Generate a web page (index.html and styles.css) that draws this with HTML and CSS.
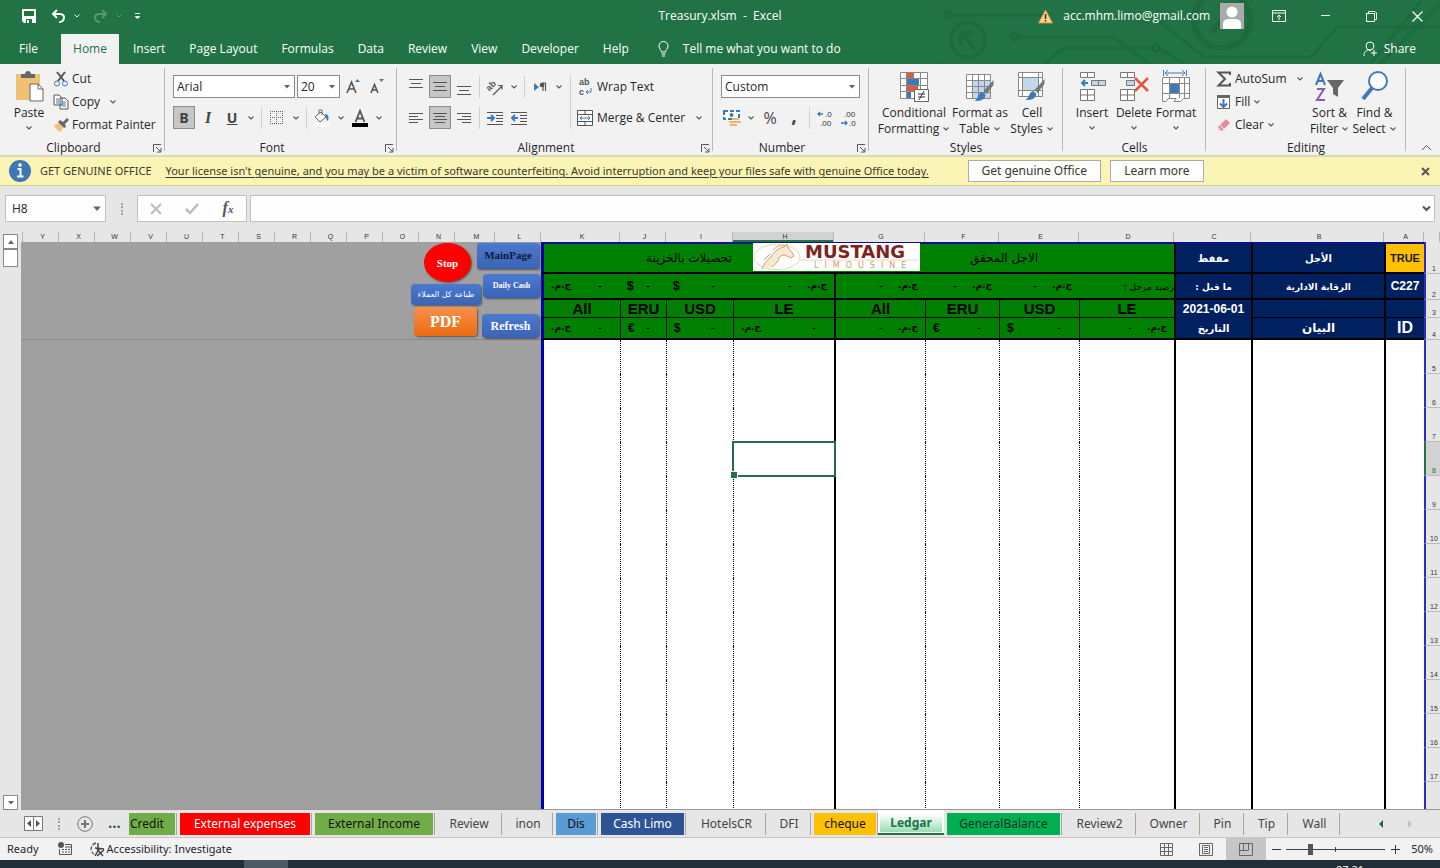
FILE: index.html
```html
<!DOCTYPE html>
<html lang="en">
<head>
<meta charset="utf-8">
<title>Treasury.xlsm - Excel</title>
<link rel="stylesheet" href="styles.css">
</head>
<body>
<svg class="defs" aria-hidden="true">
  <symbol id="chev" viewBox="0 0 8 6"><path d="M1.5 1.5L4 4l2.5-2.5" fill="none" stroke="#555" stroke-width="1.1"/></symbol>
  <symbol id="tri" viewBox="0 0 8 6"><path d="M1 1h6L4 4.500z" fill="#666"/></symbol>
  <symbol id="launch" viewBox="0 0 9 9"><path d="M.5 8V.5H8M3 3l4.500 4.500M8 4v4H4" fill="none" stroke="#555"/></symbol>
  <symbol id="brush" viewBox="0 0 20 22"><path d="M19 0v5l-7 9-3-3z" fill="#777"/><path d="M8 12l3 3c-1 5-5 6-11 6 4-2 3-8 8-9z" fill="#3f7ab8"/></symbol>
</svg>

<header class="top">
  <svg class="circuit" viewBox="0 0 520 64" aria-hidden="true">
    <g fill="none" stroke="#1e6a3f" stroke-width="3">
      <circle cx="29" cy="15" r="3"/><path d="M32 15h92"/>
      <circle cx="95" cy="37" r="3.500"/><path d="M99 37h94l44 32"/>
      <circle cx="20" cy="67" r="3"/><path d="M23 68h98l22-20h90M240 49l32 19h175L505-4"/>
      <circle cx="236" cy="48" r="3.500"/>
      <path d="M240 22l44 35h107l26-30h103M520 4l-72 72"/>
      <circle cx="48" cy="40" r="17.500" stroke-width="4"/>
      <path d="M55 49L41 33M41 45V33h12" stroke-width="4"/>
      <circle cx="302" cy="20" r="28" stroke-width="6"/>
      <path d="M292 32l20-23M298 7h15v14" stroke-width="6"/>
    </g>
  </svg>
  <div class="titlebar">
    <div class="quick">
      <button aria-label="Save"><svg width="14" height="14" viewBox="0 0 14 14"><path d="M0 0h14v14H2l-2-2zM2 2v5h10V2zM4 10v4h6v-4z" fill="#fff" fill-rule="evenodd"/><path d="M5 11h2v3H5z" fill="#fff"/></svg></button>
      <button aria-label="Undo"><svg width="15" height="14" viewBox="0 0 15 14"><path d="M2 5h7c6 0 5 8-1 8M6 1L2 5l4 4" fill="none" stroke="#fff" stroke-width="2"/></svg></button>
      <button class="mini" aria-label="Undo list"><svg width="8" height="6" viewBox="0 0 8 6"><path d="M1.500 1.500L4 4l2.500-2.500" fill="none" stroke="#fff"/></svg></button>
      <button aria-label="Redo" class="dim"><svg width="15" height="14" viewBox="0 0 15 14"><path d="M13 5H6C0 5 1 13 7 13M9 1l4 4-4 4" fill="none" stroke="#fff" stroke-width="2"/></svg></button>
      <button class="mini dim" aria-label="Redo list"><svg width="8" height="6" viewBox="0 0 8 6"><path d="M1.500 1.500L4 4l2.500-2.500" fill="none" stroke="#fff"/></svg></button>
      <button class="custom" aria-label="Customize"><svg width="7" height="8" viewBox="0 0 7 8"><path d="M1 1.500h5" stroke="#fff"/><path d="M.5 4h6l-3 3z" fill="#fff"/></svg></button>
    </div>
    <div class="doc">Treasury.xlsm&nbsp; -&nbsp; Excel</div>
    <div class="account">
      <svg width="15" height="15" viewBox="0 0 15 15"><path d="M7.500 1L14.500 14H.5z" fill="#ffd68a" stroke="#e8873a"/><path d="M7.500 5v5M7.500 11v1.500" stroke="#333" stroke-width="1.600"/></svg>
      <span class="mail">acc.mhm.limo@gmail.com</span>
      <svg width="24" height="26" viewBox="0 0 24 26"><path fill="#aaa" d="M0 0h24v26H0z"/><circle cx="12" cy="9" r="5.500" fill="#fff"/><path d="M3 26v-5c0-4 3-5 6-5h6c3 0 6 1 6 5v5z" fill="#fff"/></svg>
    </div>
    <div class="window">
      <button aria-label="Ribbon display options"><svg width="14" height="12" viewBox="0 0 14 12"><path d="M.5.5h13v11H.5zM.5 3h13M7 10V5M5 7l2-2 2 2" fill="none" stroke="#fff"/></svg></button>
      <button aria-label="Minimize"><svg width="11" height="11" viewBox="0 0 11 11"><path d="M1 4.500h9" stroke="#fff"/></svg></button>
      <button aria-label="Restore"><svg width="11" height="11" viewBox="0 0 11 11"><path d="M.5 2.500h8v8h-8zM2.500 2V.5H9L10.500 2v6.500H9" fill="none" stroke="#fff"/></svg></button>
      <button aria-label="Close"><svg width="11" height="11" viewBox="0 0 11 11"><path d="M.5.5l10 10M10.500.5l-10 10" stroke="#fff" stroke-width="1.200"/></svg></button>
    </div>
  </div>
  <nav class="menu">
    <button class="file">File</button><button class="on">Home</button><button>Insert</button><button>Page Layout</button><button>Formulas</button><button>Data</button><button>Review</button><button>View</button><button>Developer</button><button>Help</button>
    <button class="tell"><svg width="11" height="16" viewBox="0 0 11 16"><path d="M3.500 11C3.500 9 1 8 1 5a4.500 4.500 0 0 1 9 0c0 3-2.500 4-2.500 6zM3.500 13h4M4 15h3" fill="none" stroke="#fff"/></svg>Tell me what you want to do</button>
    <button class="share"><svg width="15" height="16" viewBox="0 0 15 16"><circle cx="7" cy="5" r="4" fill="none" stroke="#fff"/><path d="M1 15c0-4 2-6 5-6l2 1M11 9v6M8 12h6" fill="none" stroke="#fff"/></svg>Share</button>
  </nav>
</header>

<section class="ribbon">
  <div class="group clipboard">
    <div class="body">
      <button class="big"><svg width="30" height="32" viewBox="0 0 30 32"><path d="M2 4h24v26H2z" fill="#eec272"/><path d="M7 8V4h4c0-4 6-4 6 0h4v4z" fill="#666"/><path d="M16 14h8l5 5v12H16z" fill="#fff" stroke="#666"/><path d="M24 14v5h5" fill="none" stroke="#666"/></svg><span>Paste</span><svg width="8" height="6"><use href="#chev"/></svg></button>
      <div class="stack">
        <button><svg width="16" height="16" viewBox="0 0 16 16"><path d="M4 1l7 9M12 1L5 10" stroke="#555" stroke-width="2"/><circle cx="4" cy="12.500" r="2.500" fill="none" stroke="#3f7ab8"/><circle cx="12" cy="12.500" r="2.500" fill="none" stroke="#3f7ab8"/></svg>Cut</button>
        <button><svg width="16" height="16" viewBox="0 0 16 16"><path d="M1 1h5l3 3v7H1zM7 4h5l3 3v8H7z" fill="#fff" stroke="#555"/><path d="M3 5h3M3 7h3M3 9h3M9 8h4M9 10h4M9 12h4" stroke="#3f7ab8"/></svg>Copy<svg class="later" width="8" height="6"><use href="#chev"/></svg></button>
        <button><svg width="16" height="16" viewBox="0 0 16 16"><path d="M1 8l5-2 4 5-3 4c-2-1-4-3-6-7z" fill="#eec272"/><path d="M5 5l2-2 3 2 4-4 2 2-4 4 1 3-2 1z" fill="#666"/></svg>Format Painter</button>
      </div>
    </div>
    <div class="label">Clipboard<button aria-label="Clipboard options"><svg width="9" height="9"><use href="#launch"/></svg></button></div>
  </div>

  <div class="group font">
    <div class="body rows">
      <div class="row">
        <label class="combo face"><select aria-label="Font"><option>Arial</option></select><svg width="8" height="6"><use href="#tri"/></svg></label>
        <label class="combo size"><select aria-label="Font size"><option>20</option></select><svg width="8" height="6"><use href="#tri"/></svg></label>
        <button class="t" aria-label="Increase font size"><svg width="18" height="18" viewBox="0 0 18 18"><path d="M3 15L7.500 4 12 15M4.500 11h6" fill="none" stroke="#555" stroke-width="1.600"/><path d="M11 4l2.500-3L16 4z" fill="#3f7ab8"/></svg></button>
        <button class="t" aria-label="Decrease font size"><svg width="18" height="18" viewBox="0 0 18 18"><path d="M3 15l3.500-8.500L10 15M4.500 12h4.500" fill="none" stroke="#555" stroke-width="1.600"/><path d="M11 1h5l-2.500 3z" fill="#3f7ab8"/></svg></button>
      </div>
      <div class="row">
        <button class="t on"><b>B</b></button><button class="t it"><i>I</i></button><button class="t"><u><b>U</b></u></button><button class="c" aria-label="Underline list"><svg width="8" height="6"><use href="#chev"/></svg></button><span class="sep"></span>
        <button class="t" aria-label="Borders"><svg width="14" height="14" viewBox="0 0 14 14"><path d="M.5 0v13M6.500 0v13M12.500 0v13M0 .5h13M0 6.500h13" stroke="#666" stroke-dasharray="1 1"/><path d="M0 12.500h13" stroke="#555" stroke-dasharray="1 1"/></svg></button><button class="c" aria-label="Border list"><svg width="8" height="6"><use href="#chev"/></svg></button><span class="sep"></span>
        <button class="t" aria-label="Fill color"><svg width="18" height="18" viewBox="0 0 18 18"><path d="M2 8l6-5 5 5-6 5zM6 5V1h3v5" fill="#fff" stroke="#666"/><path d="M12 5c4 0 4 4 3 7-2-1-2-3-3-7z" fill="#3f7ab8"/><path d="M1 14h15v4H1z" fill="#fff"/></svg></button><button class="c" aria-label="Fill list"><svg width="8" height="6"><use href="#chev"/></svg></button>
        <button class="t" aria-label="Font color"><svg width="18" height="18" viewBox="0 0 18 18"><path d="M4.500 13L9 2l4.500 11M6 9.500h6" fill="none" stroke="#555" stroke-width="1.800"/><path d="M1 14h16v4H1z"/></svg></button><button class="c" aria-label="Color list"><svg width="8" height="6"><use href="#chev"/></svg></button>
      </div>
    </div>
    <div class="label">Font<button aria-label="Font options"><svg width="9" height="9"><use href="#launch"/></svg></button></div>
  </div>

  <div class="group align">
    <div class="body">
      <div class="rows">
        <div class="row">
          <button class="t" aria-label="Top"><svg width="14" height="16" viewBox="0 0 14 16"><path d="M0 .5h14M2 4.500h10M0 8.500h14" stroke="#555"/></svg></button>
          <button class="t on" aria-label="Middle"><svg width="14" height="16" viewBox="0 0 14 16"><path d="M0 3.500h14M2 7.500h10M0 11.500h14" stroke="#555"/></svg></button>
          <button class="t" aria-label="Bottom"><svg width="14" height="16" viewBox="0 0 14 16"><path d="M0 7.500h14M2 11.500h10M0 15.500h14" stroke="#555"/></svg></button>
          <span class="sep"></span>
          <button class="t" aria-label="Orientation"><svg width="18" height="18" viewBox="0 0 18 18"><text x="0" y="10" transform="rotate(-45 6 8)" class="ab">ab</text><path d="M7 17l9-9M12 7.500h4v4" fill="none" stroke="#555" stroke-width="1.200"/></svg></button><button class="c" aria-label="Orientation list"><svg width="8" height="6"><use href="#chev"/></svg></button>
          <span class="sep"></span>
          <button class="t" aria-label="Text direction"><svg width="14" height="12" viewBox="0 0 14 12"><path d="M1 2l5 4-5 4z" fill="#3f7ab8"/><path d="M9 2h4M10 2v8M12.500 2v8" stroke="#555" stroke-width="1.200"/><circle cx="9" cy="4" r="2.300" fill="#555"/></svg></button><button class="c" aria-label="Direction list"><svg width="8" height="6"><use href="#chev"/></svg></button>
        </div>
        <div class="row">
          <button class="t" aria-label="Left"><svg width="14" height="14" viewBox="0 0 14 14"><path d="M0 2.500h14M0 5.500h9M0 8.500h14M0 11.500h9" stroke="#555"/></svg></button>
          <button class="t on" aria-label="Center"><svg width="14" height="14" viewBox="0 0 14 14"><path d="M0 2.500h14M2 5.500h10M0 8.500h14M2 11.500h10" stroke="#555"/></svg></button>
          <button class="t" aria-label="Right"><svg width="14" height="14" viewBox="0 0 14 14"><path d="M0 2.500h14M5 5.500h9M0 8.500h14M5 11.500h9" stroke="#555"/></svg></button>
          <span class="sep"></span>
          <button class="t" aria-label="Decrease indent"><svg width="16" height="14" viewBox="0 0 16 14"><path d="M0 1.500h16M9 4.500h7M9 7.500h7M9 10.500h7M0 13.500h16" stroke="#555"/><path d="M0 7h6M4 4l3 3-3 3" fill="none" stroke="#3f7ab8" stroke-width="2"/></svg></button>
          <button class="t" aria-label="Increase indent"><svg width="16" height="14" viewBox="0 0 16 14"><path d="M0 1.500h16M9 4.500h7M9 7.500h7M9 10.500h7M0 13.500h16" stroke="#555"/><path d="M7 7H2M4 4L1 7l3 3" fill="none" stroke="#3f7ab8" stroke-width="2"/></svg></button>
        </div>
      </div>
      <span class="sep tall"></span>
      <div class="rows">
        <div class="row"><button class="text"><svg width="16" height="20" viewBox="0 0 16 20"><text x="2" y="8" class="abc">ab</text><text x="2" y="18" class="abc">c</text><path d="M14 11v4H9M11 13l-2 2 2 2" fill="none" stroke="#3f7ab8"/></svg>Wrap Text</button></div>
        <div class="row"><button class="text"><svg width="16" height="16" viewBox="0 0 16 16"><path d="M.5.5h15v15H.5zM.5 4.500h15M.5 11.500h15M8 .5v4M8 11.500v4" fill="#fff" stroke="#555"/><path d="M3 8h10M5 6L3 8l2 2M11 6l2 2-2 2" fill="none" stroke="#3f7ab8"/></svg>Merge &amp; Center<svg class="later" width="8" height="6"><use href="#chev"/></svg></button></div>
      </div>
    </div>
    <div class="label">Alignment<button aria-label="Alignment options"><svg width="9" height="9"><use href="#launch"/></svg></button></div>
  </div>

  <div class="group number">
    <div class="body rows">
      <div class="row"><label class="combo format"><select aria-label="Number format"><option>Custom</option></select><svg width="8" height="6"><use href="#tri"/></svg></label></div>
      <div class="row">
        <button class="t" aria-label="Accounting"><svg width="18" height="16" viewBox="0 0 18 16"><path d="M1 1h15v8H1z" fill="#fff" stroke="#3f7ab8" stroke-width="2" stroke-dasharray="4 2"/><circle cx="8.500" cy="5" r="2" fill="#3f7ab8"/><path d="M9 8h7v2H9zM11 11h7v2h-7zM6 11h5v2H6zM7 14h7v2H7z" fill="#e9b96e"/></svg></button><button class="c" aria-label="Accounting list"><svg width="8" height="6"><use href="#chev"/></svg></button>
        <button class="t pct">%</button><button class="t pct comma"><b>,</b></button><span class="sep"></span>
        <button class="t" aria-label="Increase decimal"><svg width="16" height="20" viewBox="0 0 16 20"><path d="M6 6H1M3 4L1 6l2 2" fill="none" stroke="#3f7ab8" stroke-width="1.300"/><text x="8" y="9" class="dec">.0</text><text x="3" y="18" class="dec">.00</text></svg></button>
        <button class="t" aria-label="Decrease decimal"><svg width="16" height="20" viewBox="0 0 16 20"><path d="M0 15h6M4 13l2 2-2 2" fill="none" stroke="#3f7ab8" stroke-width="1.300"/><text x="3" y="9" class="dec">.00</text><text x="8" y="18" class="dec">.0</text></svg></button>
      </div>
    </div>
    <div class="label">Number<button aria-label="Number options"><svg width="9" height="9"><use href="#launch"/></svg></button></div>
  </div>

  <div class="group styles">
    <div class="body">
      <button class="big"><svg width="30" height="32" viewBox="0 0 30 32"><path d="M1 2h27v27H1z" fill="#fff"/><path d="M8 2h6v6H8zM8 16h11v5H8z" fill="#e0583f"/><path d="M8 9h12v6H8zM8 22h4v7H8z" fill="#3f7ab8"/><path d="M1.500 2.500h27v26h-27zM1.500 8.500h27M1.500 15.500h27M1.500 21.500h27M7.500 2v27M14.500 2v7M21.500 2v27" fill="none" stroke="#888"/><path d="M15.500 19.500h14v12h-14z" fill="#fff" stroke="#666"/><path d="M19 24h7M19 27h7M25 21l-5 9" stroke="#333"/></svg><span>Conditional</span><span>Formatting <svg width="8" height="6"><use href="#chev"/></svg></span></button>
      <button class="big"><svg width="30" height="32" viewBox="0 0 30 32"><path d="M1.500 4.500h24v24h-24z" fill="#fff"/><path d="M8 11h18v17H8z" fill="#c3d6ea"/><path d="M1.500 4.500h24v24h-24zM1.500 10.500h24M1.500 16.500h24M1.500 22.500h24M7.500 4v24M13.500 4v24M19.500 4v24" fill="none" stroke="#888"/><use href="#brush" x="9" y="10" width="21" height="22"/></svg><span>Format as</span><span>Table <svg width="8" height="6"><use href="#chev"/></svg></span></button>
      <button class="big"><svg width="30" height="32" viewBox="0 0 30 32"><path d="M1.500 2.500h24v24h-24z" fill="#fff"/><path d="M6 8h15v12H6z" fill="#c3d6ea"/><path d="M1.500 2.500h24v24h-24zM1.500 7.500h24M1.500 20.500h24M5.500 2v24M21.500 2v24" fill="none" stroke="#888"/><use href="#brush" x="8" y="9" width="21" height="22"/></svg><span>Cell</span><span>Styles <svg width="8" height="6"><use href="#chev"/></svg></span></button>
    </div>
    <div class="label">Styles</div>
  </div>

  <div class="group cells">
    <div class="body">
      <button class="big"><svg width="30" height="32" viewBox="0 0 30 32"><path d="M3.500 2.500h14v5h-14zM10.500 2v6M3.500 19.500h14v11h-14zM3.500 25h14M10.500 19v12" fill="#fff" stroke="#777"/><path d="M14.500 10.500h14v5h-14zM21.500 10v6" fill="#c3d6ea" stroke="#777"/><path d="M11 13H5M8 10l-3 3 3 3" fill="none" stroke="#3f7ab8" stroke-width="2"/></svg><span>Insert</span><svg width="8" height="6"><use href="#chev"/></svg></button>
      <button class="big"><svg width="30" height="32" viewBox="0 0 30 32"><path d="M1.500 2.500h14v5h-14zM8.500 2v6M1.500 19.500h14v11h-14zM1.500 25h14M8.500 19v12" fill="#fff" stroke="#777"/><path d="M7.500 10.500h8v5h-8z" fill="#c3d6ea" stroke="#777"/><path d="M16 8l13 13M29 8L16 21" stroke="#e0583f" stroke-width="2.500"/></svg><span>Delete</span><svg width="8" height="6"><use href="#chev"/></svg></button>
      <button class="big"><svg width="30" height="32" viewBox="0 0 30 32"><path d="M2.500 0v6M25.500 0v6M4 3h20M7 0L4 3l3 3M21 0l3 3-3 3" fill="none" stroke="#3f7ab8"/><path d="M1.500 7.500h27v21h-6l-3 3H13l2-3H7l-2 3H1.500z" fill="#fff" stroke="#888"/><path d="M1.500 13.500h27M1.500 23.500h27M8.500 7v21M18.500 7v21M23.500 7v21" stroke="#888"/><path d="M9 14h9v9H9z" fill="#3f7ab8"/></svg><span>Format</span><svg width="8" height="6"><use href="#chev"/></svg></button>
    </div>
    <div class="label">Cells</div>
  </div>

  <div class="group editing">
    <div class="body">
      <div class="stack">
        <button><svg width="16" height="16" viewBox="0 0 16 16"><path d="M14 4V1.500H2.500L9 8l-6.500 6.500H14V12" fill="none" stroke="#555" stroke-width="2"/></svg>AutoSum<svg class="later" width="8" height="6"><use href="#chev"/></svg></button>
        <button><svg width="16" height="16" viewBox="0 0 16 16"><path d="M1.500 1.500h12v13h-12z" fill="#fff" stroke="#666"/><path d="M1 1h13v3H1z" fill="#666"/><path d="M7.500 5v8M4 9.500L7.500 13 11 9.500" fill="none" stroke="#3f7ab8" stroke-width="2"/></svg>Fill <svg width="8" height="6"><use href="#chev"/></svg></button>
        <button><svg width="16" height="16" viewBox="0 0 16 16"><path d="M2 10l8-8 4 4-8 8H4l-2-2z" fill="#ea8a9c"/><path d="M2 10l4 4H4l-2-2z" fill="#f7d0d8"/><path d="M4 8l4 4" stroke="#fff"/></svg>Clear <svg width="8" height="6"><use href="#chev"/></svg></button>
      </div>
      <button class="big"><svg width="30" height="32" viewBox="0 0 30 32"><path d="M1 15L5.500 4 10 15M3 11h5" fill="none" stroke="#3f7ab8" stroke-width="2"/><path d="M2 19h7L2 30h8" fill="none" stroke="#8a5bb0" stroke-width="2"/><path d="M12 10h17l-6 8v9l-5-3v-6z" fill="#666"/></svg><span>Sort &amp;</span><span>Filter <svg width="8" height="6"><use href="#chev"/></svg></span></button>
      <button class="big"><svg width="30" height="32" viewBox="0 0 30 32"><circle cx="18" cy="11" r="9" fill="#fff" stroke="#3f7ab8" stroke-width="2"/><path d="M12 18L3 29" stroke="#3f7ab8" stroke-width="4"/></svg><span>Find &amp;</span><span>Select <svg width="8" height="6"><use href="#chev"/></svg></span></button>
    </div>
    <div class="label">Editing</div>
  </div>
  <button class="collapse" aria-label="Collapse ribbon"><svg width="11" height="7" viewBox="0 0 11 7"><path d="M1 6l4.500-4.500L10 6" fill="none" stroke="#555"/></svg></button>
</section>

<div class="notice">
  <svg width="22" height="22" viewBox="0 0 22 22"><circle cx="11" cy="11" r="11" fill="#3f76b5"/><circle cx="11" cy="5" r="1.800" fill="#fff"/><path d="M8.500 9h3v7M8 16.500h6.500" fill="none" stroke="#fff" stroke-width="2"/></svg>
  <span>GET GENUINE OFFICE</span>
  <a href="#license">Your license isn't genuine, and you may be a victim of software counterfeiting. Avoid interruption and keep your files safe with genuine Office today.</a>
  <button class="get">Get genuine Office</button><button class="more">Learn more</button>
  <button class="dismiss" aria-label="Dismiss"><svg width="9" height="9" viewBox="0 0 9 9"><path d="M1 1l7 7M8 1L1 8" stroke="#555" stroke-width="2"/></svg></button>
</div>

<div class="formula">
  <label class="combo name"><input aria-label="Name box" value="H8"><svg width="10" height="8" viewBox="0 0 8 6"><use href="#tri"/></svg></label>
  <span class="dots"></span>
  <div class="fx">
    <button aria-label="Cancel"><svg width="12" height="12" viewBox="0 0 12 12"><path d="M1 1l10 10M11 1L1 11" stroke="#bbb" stroke-width="2"/></svg></button>
    <button aria-label="Enter"><svg width="14" height="12" viewBox="0 0 14 12"><path d="M1 6l4 4 8-9" fill="none" stroke="#bbb" stroke-width="2.500"/></svg></button>
    <button aria-label="Insert function"><i>f<small>x</small></i></button>
  </div>
  <label class="combo entry"><input aria-label="Formula"><svg width="9" height="7" viewBox="0 0 9 7"><path d="M1 1.500l3.500 3.500L8 1.500" fill="none" stroke="#555" stroke-width="2"/></svg></label>
</div>

<main class="sheet">
  <div class="scroll">
    <button aria-label="Scroll up"><svg width="8" height="6" viewBox="0 0 8 6"><path d="M1 5h6L4 1z" fill="#666"/></svg></button>
    <span class="thumb"></span>
    <button class="down" aria-label="Scroll down"><svg width="8" height="6"><use href="#tri"/></svg></button>
  </div>
  <div class="pane">
    <table class="grid">
      <colgroup><col><col span="12" class="w36"><col class="w40"><col class="w46"><col class="wk"><col class="wj"><col class="wi"><col class="wh"><col class="wg"><col class="wf"><col class="we"><col class="wd"><col class="wc"><col class="wb"><col class="wa"><col class="wn"></colgroup>
      <thead><tr><th></th><th>Y</th><th>X</th><th>W</th><th>V</th><th>U</th><th>T</th><th>S</th><th>R</th><th>Q</th><th>P</th><th>O</th><th>N</th><th>M</th><th>L</th><th>K</th><th>J</th><th>I</th><th class="sel">H</th><th>G</th><th>F</th><th>E</th><th>D</th><th>C</th><th>B</th><th>A</th><th></th></tr></thead>
      <tbody class="head">
        <tr class="r1"><td class="void" colspan="15" rowspan="4"></td>
          <td class="g edge title" colspan="4"><bdi dir="rtl">تحصيلات بالخزينة</bdi></td><td class="g title" colspan="4"><bdi dir="rtl">الاجل المحقق</bdi></td>
          <td class="n tk"><bdi dir="rtl">مفقط</bdi></td><td class="n tk"><bdi dir="rtl">الأجل</bdi></td><td class="true tk">TRUE</td><th>1</th></tr>
        <tr class="r2">
          <td class="g edge"><div class="sum"><bdi dir="rtl">ج.م.</bdi><span>-</span></div></td><td class="g"><div class="sum tight"><span>$</span><span>-</span></div></td><td class="g"><div class="sum"><span>$</span><span>-</span></div></td><td class="g"><div class="sum end"><span>-</span><bdi dir="rtl">ج.م.</bdi></div></td>
          <td class="g tk"><div class="sum end"><span>-</span><bdi dir="rtl">ج.م.</bdi></div></td><td class="g"><div class="sum end"><span>-</span><bdi dir="rtl">ج.م.</bdi></div></td><td class="g"><div class="sum end"><span>-</span><bdi dir="rtl">ج.م.</bdi></div></td><td class="g carry"><bdi dir="rtl">رصيد مرحل :</bdi></td>
          <td class="n tk"><bdi dir="rtl">ما قبل :</bdi></td><td class="n tk"><bdi dir="rtl">الرقابة الادارية</bdi></td><td class="n tk code">C227</td><th>2</th></tr>
        <tr class="r3">
          <td class="g edge">All</td><td class="g th">ERU</td><td class="g th">USD</td><td class="g th">LE</td><td class="g tk">All</td><td class="g th">ERU</td><td class="g th">USD</td><td class="g th">LE</td>
          <td class="n tk date">2021-06-01</td><td class="n tk line"></td><td class="n tk line"></td><th>3</th></tr>
        <tr class="r4">
          <td class="g edge"><div class="sum"><bdi dir="rtl">ج.م.</bdi><span>-</span></div></td><td class="g th"><div class="sum tight"><span>€</span><span>-</span></div></td><td class="g th"><div class="sum"><span>$</span><span>-</span></div></td><td class="g th"><div class="sum"><bdi dir="rtl">ج.م.</bdi><span>-</span></div></td>
          <td class="g tk"><div class="sum end"><span>-</span><bdi dir="rtl">ج.م.</bdi></div></td><td class="g th"><div class="sum"><span>€</span><span>-</span></div></td><td class="g th"><div class="sum"><span>$</span><span>-</span></div></td><td class="g th"><div class="sum end"><span>-</span><bdi dir="rtl">ج.م.</bdi></div></td>
          <td class="n tk"><bdi dir="rtl">التاريخ</bdi></td><td class="n tk bayan"><bdi dir="rtl">البيان</bdi></td><td class="n tk id">ID</td><th>4</th></tr>
      </tbody>
      <tbody class="blank">
        <tr><td class="void" colspan="15"> <td><td><td><td> <td><td><td><td> <td><td><td> <th>5</th></tr>
        <tr><td class="void" colspan="15"> <td><td><td><td> <td><td><td><td> <td><td><td> <th>6</th></tr>
        <tr><td class="void" colspan="15"> <td><td><td><td> <td><td><td><td> <td><td><td> <th>7</th></tr>
        <tr><td class="void" colspan="15"> <td><td><td><td class="active"><span class="cursor"></span> <td><td><td><td> <td><td><td> <th class="sel">8</th></tr>
        <tr><td class="void" colspan="15"> <td><td><td><td> <td><td><td><td> <td><td><td> <th>9</th></tr>
        <tr><td class="void" colspan="15"> <td><td><td><td> <td><td><td><td> <td><td><td> <th>10</th></tr>
        <tr><td class="void" colspan="15"> <td><td><td><td> <td><td><td><td> <td><td><td> <th>11</th></tr>
        <tr><td class="void" colspan="15"> <td><td><td><td> <td><td><td><td> <td><td><td> <th>12</th></tr>
        <tr><td class="void" colspan="15"> <td><td><td><td> <td><td><td><td> <td><td><td> <th>13</th></tr>
        <tr><td class="void" colspan="15"> <td><td><td><td> <td><td><td><td> <td><td><td> <th>14</th></tr>
        <tr><td class="void" colspan="15"> <td><td><td><td> <td><td><td><td> <td><td><td> <th>15</th></tr>
        <tr><td class="void" colspan="15"> <td><td><td><td> <td><td><td><td> <td><td><td> <th>16</th></tr>
        <tr><td class="void" colspan="15"> <td><td><td><td> <td><td><td><td> <td><td><td> <th>17</th></tr>
        <tr><td class="void" colspan="15"> <td><td><td><td> <td><td><td><td> <td><td><td> <th></th></tr>
      </tbody>
    </table>
    <div class="shapes">
      <button class="stop">Stop</button>
      <button class="blue main">MainPage</button>
      <button class="blue daily">Daily Cash</button>
      <button class="blue print"><bdi dir="rtl">طباعة كل العملاء</bdi></button>
      <button class="pdf">PDF</button>
      <button class="blue refresh">Refresh</button>
    </div>
    <svg class="logo" viewBox="0 0 167 28" role="img" aria-label="Mustang Limousine">
      <path fill="#fff" d="M0 0h167v28H0z"/>
      <ellipse cx="24" cy="14" rx="23" ry="12.500" fill="none" stroke="#e8d3b6"/>
      <path d="M9 26c2-5 4-8 9-12 3-5 7-9 13-10l3-2 1 3c3 2 4 5 6 8l-3 2-6-3c-3 0-5 1-6 3-1 4-4 7-9 9z" fill="#f7e9d6"/>
      <path d="M9 26c2-5 4-8 9-12 3-5 7-9 13-10l3-3 1 4c3 2 4 5 6 8l-3 2-6-3c-3 0-5 1-6 3-1 4-4 7-8 9M20 7c4-4 7-5 12-4M17 11l-6 6" fill="none" stroke="#cf9f68"/>
      <path d="M47 17h118" stroke="#ecd5b8"/>
      <text x="52" y="15" class="lg1">MUSTANG</text>
      <text x="61" y="25" class="lg2">LIMOUSINE</text>
    </svg>
  </div>
</main>

<nav class="tabs">
  <div class="navs"><button class="move" aria-label="Scroll tabs"><svg width="20" height="15" viewBox="0 0 20 15"><path d="M.5.500h9v14h-9zM9.500.5h9v14h-9z" fill="#fff" stroke="#777"/><path d="M7 4v7L3 7.500zM12 4v7l4-3.500z" fill="#555"/></svg></button><span class="dots"></span><button aria-label="New sheet"><svg width="16" height="16" viewBox="0 0 16 16"><circle cx="8" cy="8" r="7.300" fill="none" stroke="#777"/><path d="M8 4v8M4 8h8" stroke="#777" stroke-width="2"/></svg></button><button class="ell">...</button></div>
  <div class="list">
    <button class="lime cut"><span>Credit</span></button><button class="red"><span>External expenses</span></button><button class="lime"><span>External Income</span></button><button><span>Review</span></button><button><span>inon</span></button><button class="sky"><span>Dis</span></button><button class="navy"><span>Cash Limo</span></button><button><span>HotelsCR</span></button><button><span>DFI</span></button><button class="gold"><span>cheque</span></button><button class="current"><span>Ledgar</span></button><button class="emerald"><span>GeneralBalance</span></button><button><span>Review2</span></button><button><span>Owner</span></button><button><span>Pin</span></button><button><span>Tip</span></button><button><span>Wall</span></button>
  </div>
  <div class="hs"><button aria-label="Scroll left"><svg width="6" height="8" viewBox="0 0 6 8"><path d="M5 0v8L1 4z" fill="#1d6b40"/></svg></button><button aria-label="Scroll right"><svg width="6" height="8" viewBox="0 0 6 8"><path d="M1 0v8l4-4z" fill="#c4c4c4"/></svg></button></div>
</nav>

<footer class="status">
  <span>Ready</span>
  <button class="rec" aria-label="Record macro"><svg width="14" height="14" viewBox="0 0 14 14"><circle cx="3" cy="3" r="3" fill="#555"/><path d="M7 2.500h6.500v10h-12V7M7 5h6M4 7.500h2M7 7.500h2M10 7.500h2M4 10h2M7 10h2M10 10h2" fill="none" stroke="#555"/></svg></button>
  <button class="acc"><svg width="17" height="15" viewBox="0 0 17 15"><path d="M7 1a6 6 0 0 0-2 11" fill="none" stroke="#555" stroke-width="1.300" stroke-dasharray="4 1.500"/><path d="M9 1v5M6 6l9 1M10 7l-4 7M8 7l6 7M15 8l-7 6" fill="none" stroke="#444" stroke-width="1.500"/></svg>Accessibility: Investigate</button>
  <div class="views">
    <button aria-label="Normal"><svg width="13" height="13" viewBox="0 0 13 13"><path d="M.5.5h12v12H.5zM.5 4.500h12M.5 8.500h12M4.500.5v12M8.500.5v12" fill="none" stroke="#666"/></svg></button>
    <button aria-label="Page layout"><svg width="14" height="13" viewBox="0 0 14 13"><path d="M.5.5h13v12H.5zM3.500 2.500h7v8h-7zM5 4.500h4M5 6.500h4M5 8.500h4" fill="none" stroke="#666"/></svg></button>
    <button class="on" aria-label="Page break preview"><svg width="14" height="13" viewBox="0 0 14 13"><path d="M.5.5h13v12H.5zM4.500.5v7M9.500.5v7M.5 7.500h9" fill="none" stroke="#666"/></svg></button>
  </div>
  <button class="zb" aria-label="Zoom out"><svg width="9" height="9" viewBox="0 0 9 9"><path d="M0 4.500h9" stroke="#333"/></svg></button>
  <input type="range" class="zoom" aria-label="Zoom" min="0" max="100" value="23">
  <button class="zb" aria-label="Zoom in"><svg width="9" height="9" viewBox="0 0 9 9"><path d="M0 4.500h9M4.500 0v9" stroke="#333"/></svg></button>
  <span class="pc">50%</span>
</footer>
<div class="taskbar"><span class="app"></span><span class="clock">07:21</span></div>
</body>
</html>
```
FILE: styles.css
```css
* { box-sizing: border-box; }
body { margin: 0; height: 100vh; display: flex; flex-direction: column; overflow: hidden; background: #e6e6e6; color: #262626; font: 12px/16px "Open Sans", "Noto Sans", sans-serif; }
button, input, select { font: inherit; color: inherit; margin: 0; padding: 0; border: 0; background: none; border-radius: 0; }
button { display: flex; align-items: center; justify-content: center; white-space: nowrap; }
svg { flex: none; display: block; overflow: visible; }
.defs { position: absolute; width: 0; height: 0; overflow: hidden; }

.top { position: relative; background: #217346; color: #fff; flex: none; }
.circuit { position: absolute; right: 0; top: 0; width: 520px; height: 64px; overflow: hidden; }
.titlebar { position: relative; height: 34px; display: grid; grid-template-columns: 1fr auto 1fr; padding-bottom: 2px; align-items: center; }
.quick { display: flex; align-items: center; padding-left: 18px; gap: 3px; }
.quick button { width: 22px; height: 24px; }
.quick button + button { margin-left: 4px; }
.quick .mini, .quick button + .mini { width: 10px; margin: 0; }
.quick .dim { opacity: .25; }
.quick button + .custom { margin: 0; width: 20px; }
.account { grid-column: 3; grid-row: 1; justify-self: end; display: flex; align-items: center; gap: 10px; margin-right: 196px; }
.window { grid-column: 3; grid-row: 1; justify-self: end; display: flex; }
.window button { width: 46px; height: 32px; }
.menu { position: relative; display: flex; height: 30px; }
.menu button { padding: 0 12px; }
.menu .file { width: 61px; padding: 0 4px 0 0; }
.menu .on { background: #f3f2f3; color: #217346; width: 58px; padding: 0; margin-right: 2px; }
.menu .tell { gap: 14px; padding-left: 17px; }
.menu .share { margin-left: auto; padding-right: 24px; gap: 6px; }

.ribbon { display: flex; height: 93px; flex: none; background: #f3f2f3; border-bottom: 2px solid #ddd9b8; }
.group { position: relative; display: flex; flex-direction: column; padding-left: 8px; flex: none; }
.group::after { content: ""; position: absolute; right: 0; top: 4px; bottom: 4px; width: 1px; background: #b8b8b8; }
.body { display: flex; height: 76px; flex: none; align-items: flex-start; }
.label { position: relative; text-align: center; height: 16px; margin-left: -8px; padding-right: 18px; }
.label button { position: absolute; right: 3px; bottom: 3px; }
.clipboard { width: 165px; }
.font { width: 232px; }
.align { width: 316px; }
.number { width: 156px; }
.styles { width: 194px; }
.cells { width: 143px; }
.editing { width: 200px; }
.styles .label, .cells .label, .editing .label { padding: 0; }
.rows { display: flex; flex-direction: column; padding-top: 7px; }
.row { display: flex; align-items: center; gap: 2px; height: 31px; }
.t { width: 22px; height: 23px; flex: none; font-size: 14px; color: #444; }
.t.on { background: #c6c6c6; border: 1px solid #8e8e8e; }
.it { font-family: "Liberation Serif", serif; font-size: 16px; font-weight: bold; }
.pct { font-size: 16px; }
.comma { padding-bottom: 6px; font-size: 20px; }
.c { width: 12px; height: 23px; flex: none; }
.sep { width: 1px; height: 22px; margin: 0 2px; background: #d0d0d0; flex: none; }
.sep.tall { height: 54px; margin: 11px 4px 0 5px; }
.text { gap: 4px; padding-left: 2px; }
.later { margin-left: 6px; }
.combo { position: relative; display: flex; align-items: center; background: #fff; border: 1px solid #8a8a8a; height: 23px; }
.combo select, .combo input { appearance: none; width: 100%; height: 100%; padding: 0 3px; outline: 0; }
.combo svg { position: absolute; right: 3px; pointer-events: none; }
.face { width: 122px; }
.size { width: 43px; }
.format { width: 139px; }
.stack { display: flex; flex-direction: column; padding-top: 3px; }
.stack button { height: 23px; justify-content: flex-start; gap: 3px; }
.big { flex-direction: column; padding-top: 6px; justify-content: flex-start; height: 76px; }
.big > svg:first-child { margin-bottom: 3px; }
.big > svg:last-child { margin-top: 4px; }
.big span { display: flex; align-items: center; gap: 3px; }
.clipboard .big { width: 42px; }
.clipboard .stack { padding-left: 3px; }
.styles .big:nth-child(1) { width: 74px; }
.styles .big:nth-child(2) { width: 58px; }
.styles .big:nth-child(3) { width: 46px; }
.cells .big { width: 42px; }
.editing .stack { width: 93px; padding-left: 2px; }
.editing .big { width: 45px; }
.collapse { margin-left: auto; align-self: flex-end; padding: 0 8px 4px; }

.notice { display: flex; align-items: center; height: 29px; flex: none; padding: 0 10px 0 9px; background: #fbf5b5; border-bottom: 1px solid #d6d28c; white-space: nowrap; color: #3b3a2c; font-family: "Noto Sans", sans-serif; font-size: 11px; }
.notice span { margin: 0 14px 0 9px; }
.notice a { color: inherit; text-underline-offset: 2px; }
.notice .get, .notice .more { background: #fdfdfd; border: 1px solid #ababab; height: 22px; width: 133px; margin-left: 39px; font-size: 12px; }
.notice .more { width: 94px; margin-left: 9px; }
.notice .dismiss { margin-left: auto; }

.formula { display: flex; height: 46px; flex: none; padding: 9px 5px 9px 5px; align-items: flex-start; }
.formula .combo, .fx { height: 27px; border: 1px solid #c0c0c0; background: #fdfdfd; }
.name { width: 101px; }
.dots { width: 2px; height: 12px; border-left: 2px dotted #a0a0a0; }
.formula .dots { margin: 8px 14px 0 15px; }
.fx { display: flex; width: 110px; }
.fx button { flex: 1; font: bold 16px/20px "Liberation Serif", serif; color: #555; }
.fx small { font-size: 11px; }
.formula .entry { flex: 1; margin-left: 3px; }
.formula .combo input { padding: 0 6px; }

.sheet { flex: 1; min-height: 0; display: flex; }
.scroll { width: 21px; flex: none; display: flex; flex-direction: column; align-items: center; padding-top: 2px; }
.scroll button { width: 15px; height: 15px; background: #fff; border: 1px solid #888; }
.scroll .thumb { width: 15px; height: 18px; background: #fff; border: 1px solid #888; }
.scroll .down { margin-top: auto; }
.pane { position: relative; flex: 1; overflow: hidden; border-bottom: 1px solid #9a9a9a; }
.grid { width: 100%; table-layout: fixed; border-collapse: separate; border-spacing: 0; font-family: "Liberation Sans", "DejaVu Sans", sans-serif; font-weight: bold; }
.grid td, .grid th { padding: 0; overflow: hidden; white-space: nowrap; }
.w36 { width: 36px; } .w40 { width: 40px; } .w46 { width: 46px; }
.wk { width: 79px; } .wj { width: 46px; } .wi { width: 67px; } .wh { width: 101px; } .wg { width: 91px; } .wf { width: 74px; } .we { width: 80px; } .wd { width: 95px; } .wc { width: 77px; } .wb { width: 133px; } .wa { width: 40px; } .wn { width: 16px; }
.grid th { font: 7px/8px "Liberation Sans", sans-serif; color: #333; background: #e6e6e6; }
.grid thead th { height: 10px; border-right: 1px solid #b5b5b5; padding-left: 4px; }
.grid thead .sel { background: #d2d2d2; box-shadow: inset 0 -2px #217346; }
.grid tbody th { vertical-align: bottom; border-left: 2px solid #2c2cc0; border-bottom: 1px solid #bbb; padding-left: 2px; }
.grid tbody .sel { background: #d2d2d2; border-left-color: #217346; color: #217346; }
.void { background: #a0a0a0; }
.head .void { border-bottom: 1px solid #8a8a8a; }
.g { background: #008000; color: #000; text-align: center; border-bottom: 2px solid #000; }
.n { background: #002060; color: #fff; text-align: center; border-bottom: 2px solid #000; }
.edge, .blank td:nth-child(2) { border-left: 3px solid #0000b4; }
.tk { border-left: 2px solid #000; }
.th { border-left: 1px solid #000; }
.head bdi { font: bold 10px/14px "DejaVu Sans", sans-serif; }
.r1 { height: 32px; } .r2 { height: 26px; } .r3 { height: 18px; } .r4 { height: 22px; }
.r1 td:not(.void) { border-top: 2px solid #10108c; }
.r1 .title bdi { font-size: 12px; font-weight: normal; }
.r3 .g, .r3 .line { border-bottom-width: 1px; font-size: 15px; line-height: 16px; }
.r3 .date { border-bottom: 0; font-size: 12px; }
.true { background: #ffc000; color: #1c1c1c; text-align: center; border-bottom: 2px solid #000; font-size: 11px; }
.code { font-size: 12px; }
.id { font-size: 16px; line-height: 18px; }
.r2 .n bdi { font-size: 9px; }
.head .bayan bdi { font-size: 12px; }
.sum { display: flex; justify-content: space-between; padding: 0 18px 0 7px; font-size: 12px; }
.sum * + span, .end span { font-weight: normal; }
.head .sum bdi { font-size: 9px; }
.tight { padding-right: 16px; }
.end { justify-content: flex-end; gap: 15px; padding: 0 7px; }
.carry { text-align: right; }
.head .carry bdi { font-size: 9px; font-weight: normal; }
.blank tr { height: 34px; }
.blank td:not(.void) { background: #fff; border-left: 1px dotted #000; }
.blank td:nth-child(2):not(.void) { border-left: 3px solid #0000b4; }
.blank td:nth-child(6):not(.void), .blank td:nth-child(n+10):not(.void) { border-left: 2px solid #000; }
.grid .active { position: relative; overflow: visible; }
.cursor { position: absolute; inset: -1px -2px -1px -2px; border: 2px solid #2a6b4b; z-index: 1; }
.cursor::after { content: ""; position: absolute; left: -3px; bottom: -3px; width: 6px; height: 6px; background: #217346; border: solid #fff; border-width: 1px 1px 0 0; }

.shapes { position: absolute; top: 11px; right: 900px; width: 130px; height: 96px; }
.shapes button { position: absolute; font-family: "Liberation Serif", serif; font-weight: bold; color: #fff; box-shadow: 1px 1px 2px #555; }
.blue { background: linear-gradient(#4b7ad0, #3a63b4); border-radius: 4px; }
.shapes .stop { left: 14px; top: 0; width: 47px; height: 39px; border-radius: 50%; background: #fe0000; font-size: 11px; }
.shapes .main { left: 67px; top: 0; width: 62px; height: 26px; color: #101a38; font-size: 11px; border-radius: 2px; padding-bottom: 3px; }
.shapes .daily { left: 73px; top: 31px; width: 57px; height: 24px; font-size: 8px; }
.shapes .print { left: 1px; top: 41px; width: 70px; height: 21px; font: 8px "DejaVu Sans", sans-serif; }
.shapes .pdf { left: 4px; top: 64px; width: 63px; height: 29px; font-size: 16px; border-radius: 4px; background: linear-gradient(#f6904a, #ec6b14); }
.shapes .refresh { left: 72px; top: 71px; width: 57px; height: 24px; font-size: 12px; }
.logo { position: absolute; top: 11px; right: 520px; width: 167px; height: 28px; }
.lg1 { font: bold 18px "DejaVu Sans", sans-serif; fill: #7c2320; }
.lg2 { font: 8px "DejaVu Sans", sans-serif; fill: #d09a62; letter-spacing: 6px; }
.ab, .abc { font: bold 9px "Liberation Sans", sans-serif; fill: #555; }
.dec { font: 8px "Liberation Sans", sans-serif; fill: #333; }

.tabs { display: flex; height: 28px; flex: none; border-bottom: 1px solid #c6c6c6; font-family: "Noto Sans", sans-serif; }
.navs { width: 129px; flex: none; display: flex; align-items: center; padding-left: 24px; }
.navs .dots { margin: 0 17px 0 14px; }
.navs .ell { margin-left: 15px; font-size: 15px; color: #226b43; font-weight: bold; padding-bottom: 3px; }
.list { display: grid; grid-template-columns: 48px 135px 123px 67px 51px 45px 88px 80px 45px 67px 66px 118px 74px 64px 44px 44px 52px; }
.list button { border-right: 1px solid #a8a8a8; margin: 3px 0 3px; padding: 0 1px 0 3px; color: #444; align-items: stretch; }
.list span { flex: 1; display: flex; align-items: center; justify-content: center; height: 22px; }
.list .cut { padding-left: 0; }
.list .cut span { justify-content: flex-start; padding-left: 1px; }
.lime span { background: #70ad47; color: #111; }
.red span { background: #f00; color: #fff; }
.sky span { background: #5b9bd5; color: #111; }
.navy span { background: #2f5496; color: #fff; }
.gold span { background: #ffc000; color: #111; }
.emerald span { background: #00b050; color: #10351f; }
.list .current { margin: 0 0 3px; padding: 4px 2px 1px; background: #fff; border: 0; border-bottom: 2px solid #217346; color: #217346; font-weight: bold; }
.list .current span { background: linear-gradient(#fff, #9bdcb5); height: 18px; }
.hs { margin-left: auto; display: flex; gap: 23px; padding-right: 27px; }

.status { display: flex; align-items: center; height: 22px; flex: none; background: #f3f2f3; padding-left: 7px; font-size: 11px; font-family: "Noto Sans", sans-serif; }
.rec { margin-left: 19px; }
.acc { margin-left: 17px; gap: 1px; }
.views { display: flex; margin-left: auto; height: 22px; }
.views button { width: 40px; }
.views .on { background: #c6c6c6; }
.zb { width: 20px; height: 20px; }
.zoom { appearance: none; width: 99px; height: 12px; background: linear-gradient(#444, #444) center / 1px 5px no-repeat, linear-gradient(#444, #444) center / 100% 1px no-repeat; }
.zoom::-webkit-slider-thumb { appearance: none; width: 5px; height: 11px; background: #555; }
.pc { margin: 0 7px 0 6px; }
.taskbar { position: relative; height: 8px; flex: none; background: #212e37; overflow: hidden; display: flex; color: #fff; font-size: 11px; }
.app { width: 44px; margin-left: 244px; background: #4d5a63; }
.clock { margin: 2px 76px 0 auto; }
```
